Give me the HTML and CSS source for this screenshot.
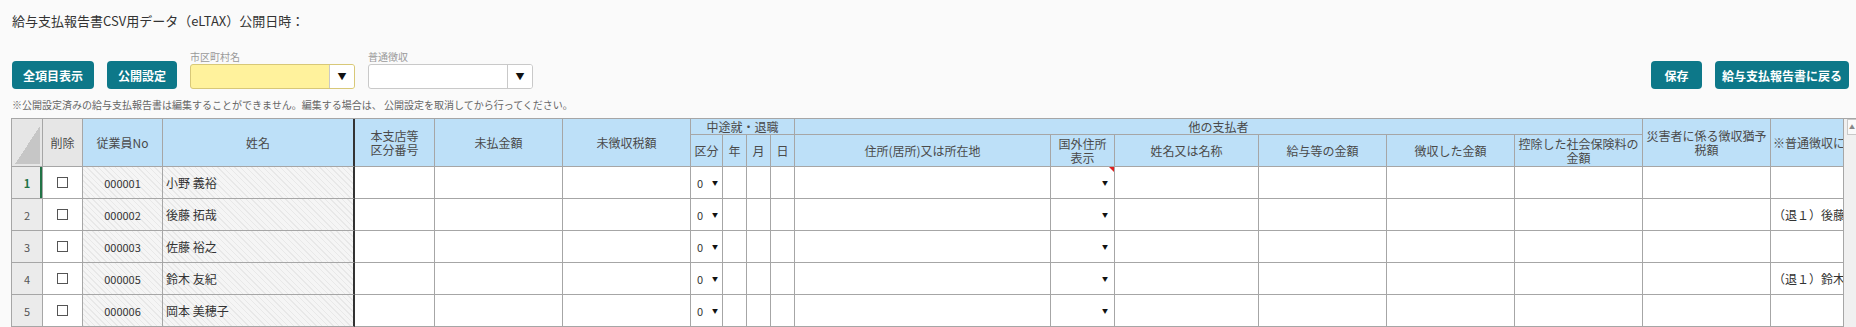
FILE: index.html
```html
<!DOCTYPE html>
<html lang="ja">
<head>
    <meta charset="UTF-8">
    <title>給与支払報告書CSV用データ（eLTAX）</title>
    <link rel="stylesheet" href="styles.css">
</head>
<body>
    <div class="top">
        <h1 class="title">給与支払報告書CSV用データ（eLTAX）公開日時：</h1>
        <div class="toolbar">
            <div class="tools-left">
                <button class="btn">全項目表示</button>
                <button class="btn">公開設定</button>
                <div class="field">
                    <label>市区町村名</label>
                    <div class="select required"><span class="value"></span><span class="arrow">▼</span></div>
                </div>
                <div class="field">
                    <label>普通徴収</label>
                    <div class="select"><span class="value"></span><span class="arrow">▼</span></div>
                </div>
            </div>
            <div class="tools-right">
                <button class="btn save">保存</button>
                <button class="btn back">給与支払報告書に戻る</button>
            </div>
        </div>
        <p class="note">※公開設定済みの給与支払報告書は編集することができません。編集する場合は、 公開設定を取消してから行ってください。</p>
    </div>

    <div class="sheet">
        <div class="grid-view">
            <div class="grid">
                <!-- header -->
                <div class="hd gray rs2 corner"><span class="tri"></span></div>
                <div class="hd gray rs2">削除</div>
                <div class="hd rs2">従業員No</div>
                <div class="hd rs2 freeze">姓名</div>
                <div class="hd rs2">本支店等<br>区分番号</div>
                <div class="hd rs2">未払金額</div>
                <div class="hd rs2">未徴収税額</div>
                <div class="hd group cs4">中途就・退職</div>
                <div class="hd group cs6">他の支払者</div>
                <div class="hd rs2">災害者に係る徴収猶予<br>税額</div>
                <div class="hd rs2 clip">※普通徴収に切り替える理由</div>
                <div class="hd">区分</div>
                <div class="hd">年</div>
                <div class="hd">月</div>
                <div class="hd">日</div>
                <div class="hd">住所(居所)又は所在地</div>
                <div class="hd">国外住所<br>表示</div>
                <div class="hd">姓名又は名称</div>
                <div class="hd">給与等の金額</div>
                <div class="hd">徴収した金額</div>
                <div class="hd">控除した社会保険料の<br>金額</div>

                <!-- row 1 -->
                <div class="rh current">1</div>
                <div class="cell chk"><span class="box"></span></div>
                <div class="cell ro num">000001</div>
                <div class="cell ro name freeze">小野 義裕</div>
                <div class="cell"></div>
                <div class="cell"></div>
                <div class="cell"></div>
                <div class="cell kubun">0<span class="dd">▼</span></div>
                <div class="cell"></div>
                <div class="cell"></div>
                <div class="cell"></div>
                <div class="cell"></div>
                <div class="cell foreign memo"><span class="dd">▼</span></div>
                <div class="cell"></div>
                <div class="cell"></div>
                <div class="cell"></div>
                <div class="cell"></div>
                <div class="cell"></div>
                <div class="cell text"></div>

                <!-- row 2 -->
                <div class="rh">2</div>
                <div class="cell chk"><span class="box"></span></div>
                <div class="cell ro num">000002</div>
                <div class="cell ro name freeze">後藤 拓哉</div>
                <div class="cell"></div>
                <div class="cell"></div>
                <div class="cell"></div>
                <div class="cell kubun">0<span class="dd">▼</span></div>
                <div class="cell"></div>
                <div class="cell"></div>
                <div class="cell"></div>
                <div class="cell"></div>
                <div class="cell foreign"><span class="dd">▼</span></div>
                <div class="cell"></div>
                <div class="cell"></div>
                <div class="cell"></div>
                <div class="cell"></div>
                <div class="cell"></div>
                <div class="cell text">（退１）後藤 拓哉</div>

                <!-- row 3 -->
                <div class="rh">3</div>
                <div class="cell chk"><span class="box"></span></div>
                <div class="cell ro num">000003</div>
                <div class="cell ro name freeze">佐藤 裕之</div>
                <div class="cell"></div>
                <div class="cell"></div>
                <div class="cell"></div>
                <div class="cell kubun">0<span class="dd">▼</span></div>
                <div class="cell"></div>
                <div class="cell"></div>
                <div class="cell"></div>
                <div class="cell"></div>
                <div class="cell foreign"><span class="dd">▼</span></div>
                <div class="cell"></div>
                <div class="cell"></div>
                <div class="cell"></div>
                <div class="cell"></div>
                <div class="cell"></div>
                <div class="cell text"></div>

                <!-- row 4 -->
                <div class="rh">4</div>
                <div class="cell chk"><span class="box"></span></div>
                <div class="cell ro num">000005</div>
                <div class="cell ro name freeze">鈴木 友紀</div>
                <div class="cell"></div>
                <div class="cell"></div>
                <div class="cell"></div>
                <div class="cell kubun">0<span class="dd">▼</span></div>
                <div class="cell"></div>
                <div class="cell"></div>
                <div class="cell"></div>
                <div class="cell"></div>
                <div class="cell foreign"><span class="dd">▼</span></div>
                <div class="cell"></div>
                <div class="cell"></div>
                <div class="cell"></div>
                <div class="cell"></div>
                <div class="cell"></div>
                <div class="cell text">（退１）鈴木 友紀</div>

                <!-- row 5 -->
                <div class="rh">5</div>
                <div class="cell chk"><span class="box"></span></div>
                <div class="cell ro num">000006</div>
                <div class="cell ro name freeze">岡本 美穂子</div>
                <div class="cell"></div>
                <div class="cell"></div>
                <div class="cell"></div>
                <div class="cell kubun">0<span class="dd">▼</span></div>
                <div class="cell"></div>
                <div class="cell"></div>
                <div class="cell"></div>
                <div class="cell"></div>
                <div class="cell foreign"><span class="dd">▼</span></div>
                <div class="cell"></div>
                <div class="cell"></div>
                <div class="cell"></div>
                <div class="cell"></div>
                <div class="cell"></div>
                <div class="cell text"></div>
            </div>
        </div>
        <div class="vscroll"><div class="up">▲</div></div>
    </div>
</body>
</html>
```

FILE: styles.css
```css
html, body {
    margin: 0;
    overflow: hidden;
}

body {
    background-color: #fafafa;
    color: #333;
    font-family: "Noto Sans CJK JP", "Noto Sans", sans-serif;
}

.top {
    padding: 11px 7px 0 12px;
}

.title {
    margin: 0;
    font-size: 13px;
    font-weight: normal;
    line-height: 20px;
}

.toolbar {
    display: flex;
    justify-content: space-between;
    align-items: flex-end;
    margin-top: 20px;
}

.tools-left,
.tools-right {
    display: flex;
    align-items: flex-end;
    gap: 13px;
}

.btn {
    height: 28px;
    padding: 0 11px;
    border: none;
    border-radius: 4px;
    background-color: #0d7889;
    color: white;
    font-family: inherit;
    font-size: 12px;
    font-weight: 700;
}

.save {
    min-width: 51px;
}

.back {
    padding: 0 7px;
}

.field {
    display: flex;
    flex-direction: column;
}

.field label {
    font-size: 10px;
    line-height: 12px;
    color: #999;
    margin-bottom: 1px;
}

.select {
    display: flex;
    width: 165px;
    height: 25px;
    box-sizing: border-box;
    border: 1px solid #c9c9c9;
    border-radius: 3px;
    background-color: white;
    overflow: hidden;
}

.select.required {
    background-color: #fff29c;
    border-color: #d8c878;
}

.select .value {
    flex: 1;
}

.select .arrow {
    display: flex;
    align-items: center;
    justify-content: center;
    width: 24px;
    border-left: 1px solid #c9c9c9;
    background-color: white;
    color: #111;
    font-size: 9px;
}

.note {
    margin: 9px 0 0;
    font-size: 10px;
    line-height: 14px;
    color: #666;
}

/* spreadsheet */

.sheet {
    display: flex;
    margin: 6px 0 0 11px;
}

.grid-view {
    flex: 1;
    overflow: hidden;
}

.grid {
    display: grid;
    grid-template-columns: 31px 40px 80px 192px 80px 128px 128px 32px 24px 24px 24px 256px 64px 144px 128px 128px 128px 128px 200px;
    grid-template-rows: 16px 32px repeat(5, 32px);
    width: max-content;
    border-top: 1px solid #a6a6a6;
    border-left: 1px solid #a6a6a6;
}

.grid > div {
    box-sizing: border-box;
    border-right: 1px solid #a6a6a6;
    border-bottom: 1px solid #a6a6a6;
    overflow: hidden;
}

.hd {
    display: flex;
    align-items: center;
    justify-content: center;
    text-align: center;
    background-color: #bde0f8;
    color: #4a4a4a;
    font-size: 12px;
    line-height: 14px;
}

.hd.gray {
    background-color: #e6e6e6;
}

.hd.group {
    line-height: 15px;
}

.hd.clip {
    justify-content: flex-start;
    padding-left: 2px;
    white-space: nowrap;
}

.rs2 { grid-row: span 2; }
.cs4 { grid-column: span 4; }
.cs6 { grid-column: span 6; }

.grid > .freeze {
    border-right: 2px solid #333;
}

.corner {
    padding: 7px 2px 2px 3px;
}

.corner .tri {
    display: block;
    width: 100%;
    height: 100%;
    background: linear-gradient(to bottom right, transparent 50%, #c6c6c6 50%);
}

.rh {
    display: flex;
    align-items: center;
    justify-content: center;
    background-color: #ebebeb;
    color: #555;
    font-size: 11px;
}

.rh.current {
    color: #217346;
    font-weight: 700;
    box-shadow: inset -2px 0 0 #217346;
}

.cell {
    display: flex;
    align-items: center;
    background-color: white;
    font-size: 11px;
    color: #333;
    white-space: nowrap;
}

.cell.ro {
    background-color: #f5f5f5;
    background-image: repeating-linear-gradient(45deg, #e8e8e8 0 1px, transparent 1px 4px);
}

.cell.num {
    justify-content: center;
}

.cell.name {
    padding-left: 3px;
    font-size: 12px;
}

.cell.chk {
    justify-content: center;
}

.box {
    width: 11px;
    height: 11px;
    box-sizing: border-box;
    border: 1px solid #555;
    background-color: white;
}

.dd {
    font-size: 6px;
    color: #111;
}

.kubun {
    padding-left: 6px;
    gap: 9px;
}

.foreign {
    justify-content: flex-end;
    padding-right: 6px;
}

.memo {
    position: relative;
}

.memo::after {
    content: "";
    position: absolute;
    top: 0;
    right: 0;
    border-top: 5px solid #e02020;
    border-left: 5px solid transparent;
}

.cell.text {
    padding-left: 2px;
    font-size: 12px;
}

.vscroll {
    width: 13px;
    height: 209px;
    box-sizing: border-box;
    border-left: 1px solid #a6a6a6;
    border-top: 1px solid #a6a6a6;
    background-color: #f0f0f0;
    padding-left: 3px;
}

.up {
    height: 16px;
    box-sizing: border-box;
    border: 1px solid #c8c8c8;
    border-right: none;
    background-color: #fafafa;
    color: #888;
    font-size: 6px;
    line-height: 14px;
    text-align: center;
}
```
